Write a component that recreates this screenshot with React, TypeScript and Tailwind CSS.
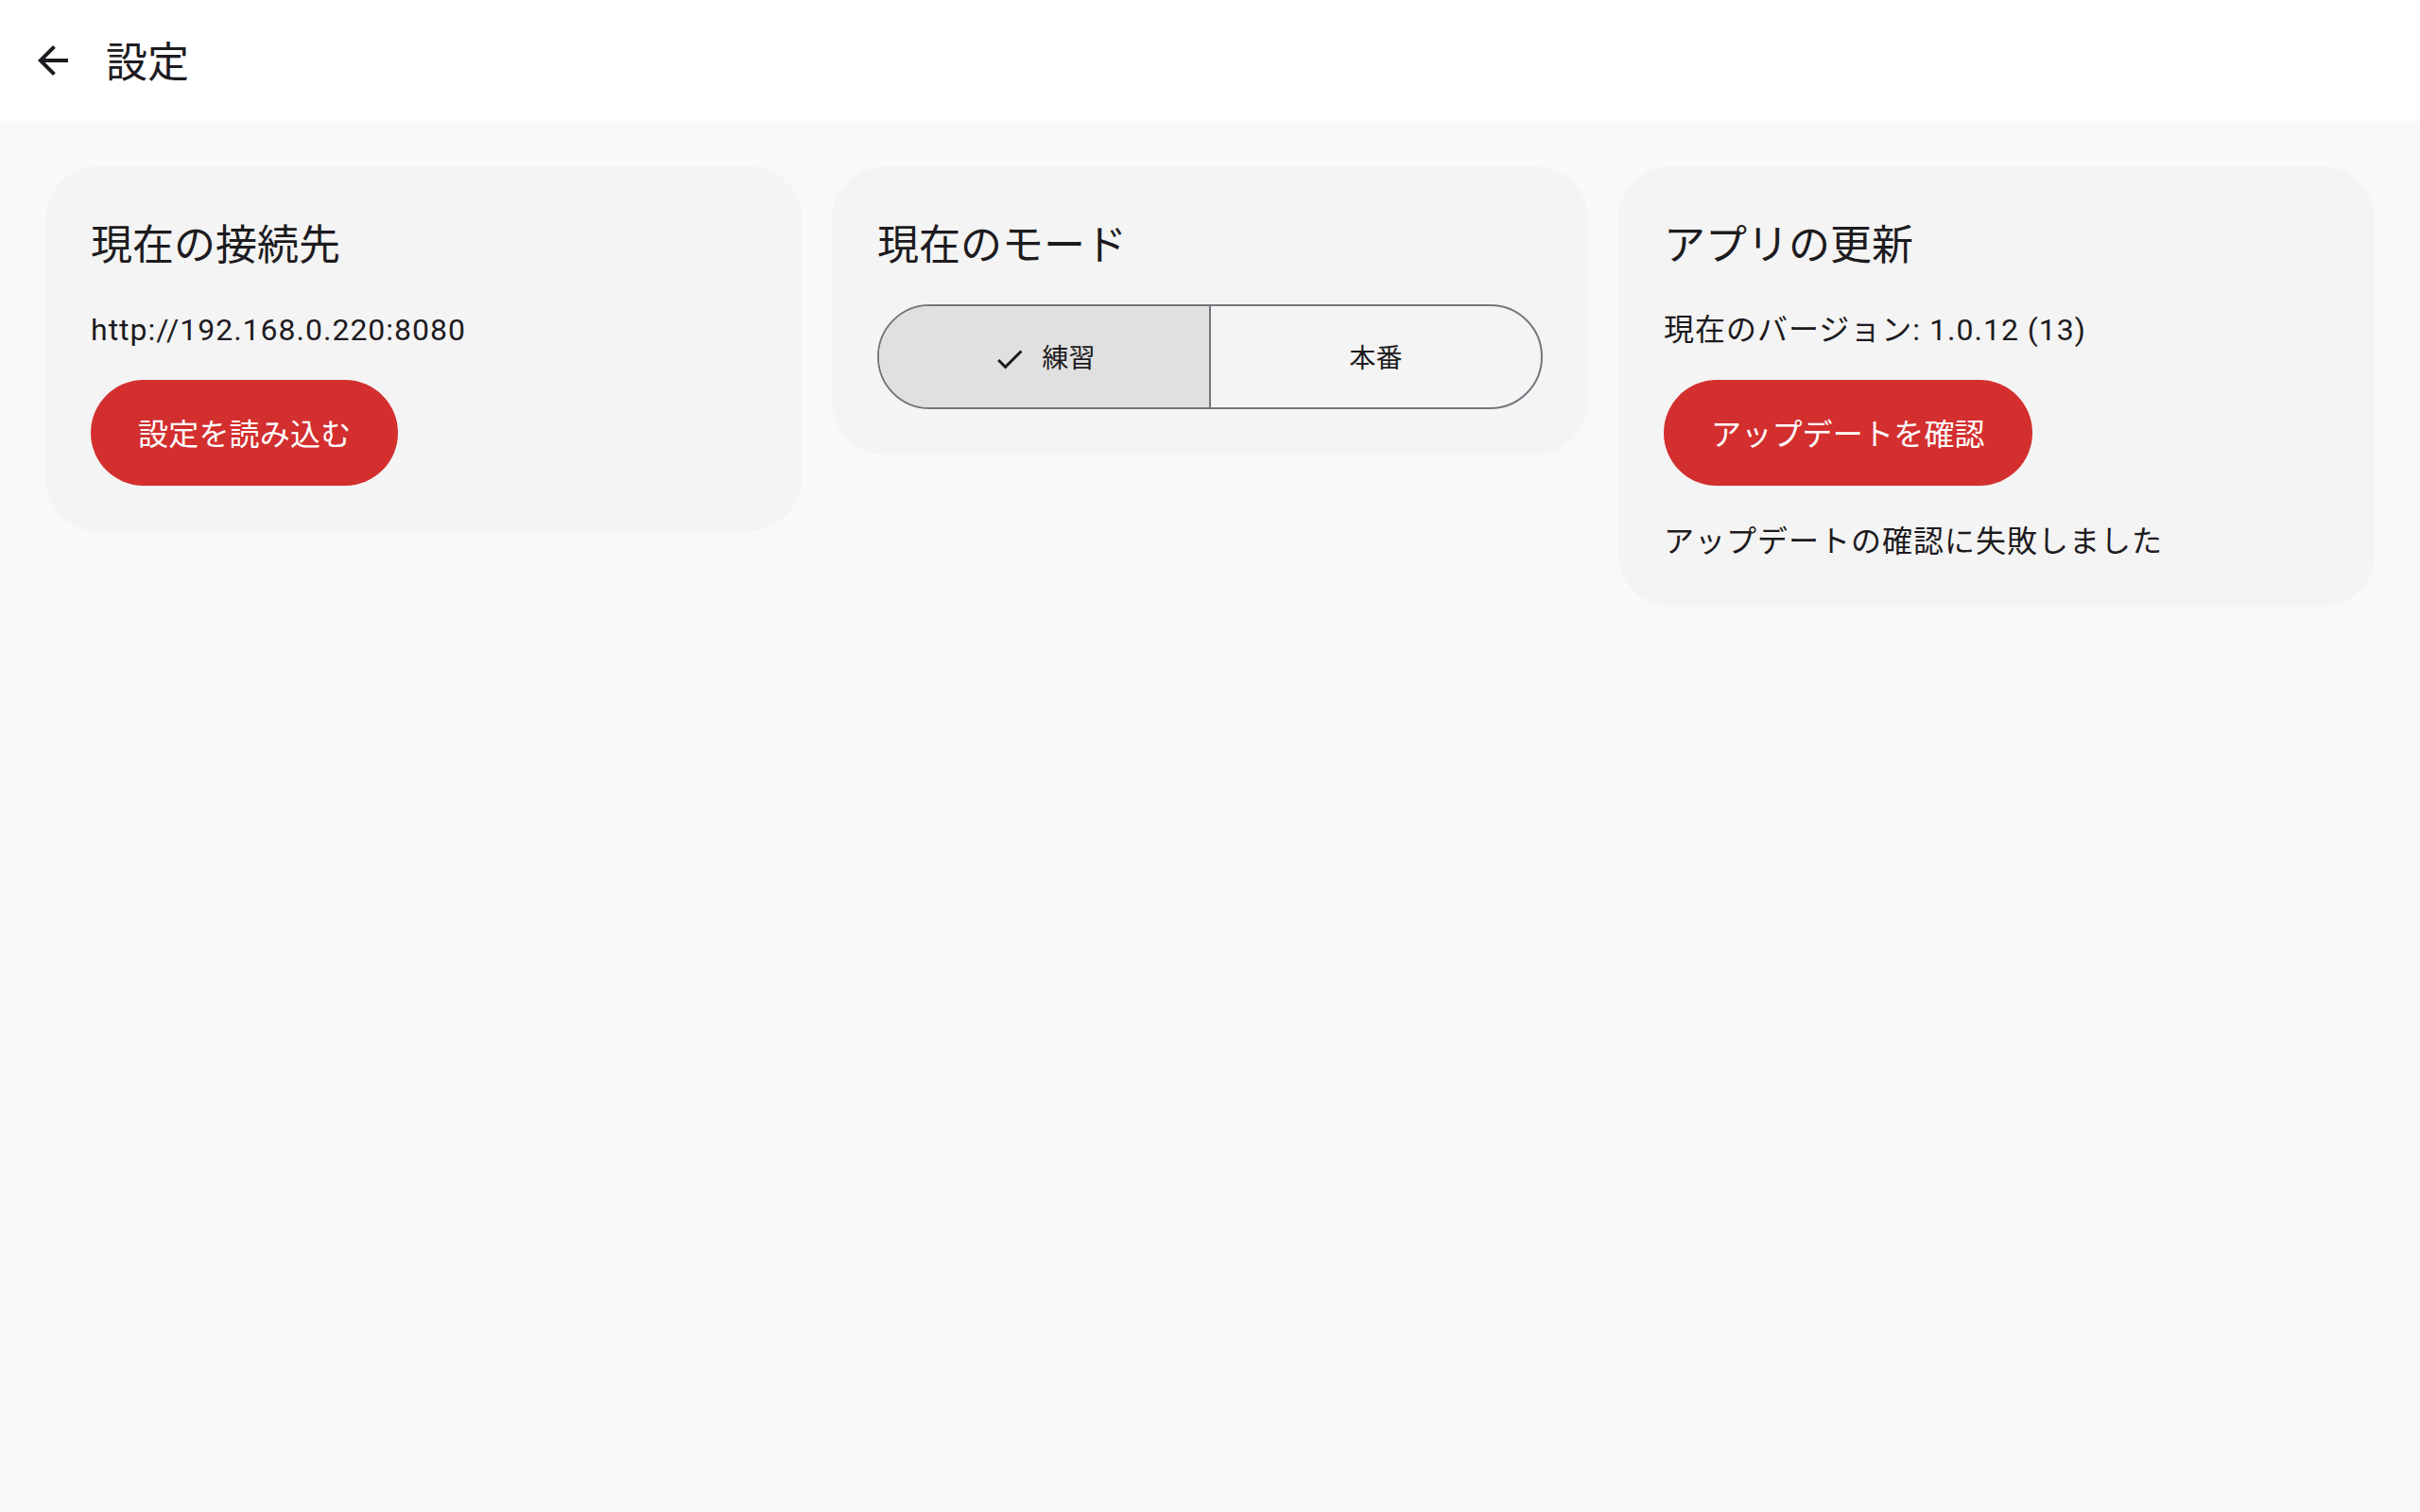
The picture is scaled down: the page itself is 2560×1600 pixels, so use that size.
import { useState } from "react";

const font = "font-['Roboto','Noto_Sans_CJK_JP',sans-serif]";

const BackIcon = () => (
  <svg viewBox="0 0 24 24" className="w-[48px] h-[48px] fill-[#1d1b20]">
    <path d="M20 11H7.83l5.59-5.59L12 4l-8 8 8 8 1.41-1.41L7.83 13H20v-2z" />
  </svg>
);

const CheckIcon = () => (
  <svg viewBox="0 0 24 24" className="w-[36px] h-[36px] fill-[#1d1b20]">
    <path d="M9 16.17L4.83 12l-1.42 1.41L9 19 21 7l-1.41-1.41z" />
  </svg>
);

const PillButton = ({ children }: { children: React.ReactNode }) => (
  <button className="h-[112px] px-[50px] pt-[4px] rounded-full bg-[#d32f2f] text-white text-[32px] tracking-[0.2px] self-start">
    {children}
  </button>
);

const CardTitle = ({ children }: { children: React.ReactNode }) => (
  <h2 className="text-[44px] leading-[60px] pt-[6px] text-[#1d1b20] mb-[32px]">{children}</h2>
);

const Body = ({ children, className = "" }: { children: React.ReactNode; className?: string }) => (
  <p className={`text-[32px] leading-[42px] pt-[6px] tracking-[1px] text-[#1d1b20] ${className}`}>
    {children}
  </p>
);

export default function App() {
  const [mode, setMode] = useState<"practice" | "production">("practice");

  return (
    <div className={`min-h-screen bg-[#f9f9f9] ${font}`}>
      {/* App bar */}
      <header className="h-[128px] bg-white flex items-center pl-[32px]">
        <button className="w-[48px] h-[48px] flex items-center justify-center">
          <BackIcon />
        </button>
        <h1 className="ml-[32px] pt-[6px] text-[44px] text-[#1d1b20]">設定</h1>
      </header>

      <main className="p-[48px] grid grid-cols-3 gap-[32px] items-start">
        {/* 接続先 */}
        <section className="bg-[#f4f4f4] rounded-[56px] p-[48px] flex flex-col">
          <CardTitle>現在の接続先</CardTitle>
          <Body className="mb-[32px]">http://192.168.0.220:8080</Body>
          <PillButton>設定を読み込む</PillButton>
        </section>

        {/* モード */}
        <section className="bg-[#f4f4f4] rounded-[56px] p-[48px] flex flex-col">
          <CardTitle>現在のモード</CardTitle>
          <div className="h-[111px] rounded-full border-2 border-[#79747e] flex overflow-hidden">
            <button
              onClick={() => setMode("practice")}
              className={`flex-1 flex items-center justify-center gap-[16px] pt-[5px] text-[28px] tracking-[0.2px] text-[#1d1b20] ${
                mode === "practice" ? "bg-[#e0e0e0]" : ""
              }`}
            >
              {mode === "practice" && <CheckIcon />}
              練習
            </button>
            <div className="w-[2px] bg-[#79747e]" />
            <button
              onClick={() => setMode("production")}
              className={`flex-1 flex items-center justify-center gap-[16px] pt-[5px] text-[28px] tracking-[0.2px] text-[#1d1b20] ${
                mode === "production" ? "bg-[#e0e0e0]" : ""
              }`}
            >
              {mode === "production" && <CheckIcon />}
              本番
            </button>
          </div>
        </section>

        {/* 更新 */}
        <section className="bg-[#f4f4f4] rounded-[56px] p-[48px] flex flex-col">
          <CardTitle>アプリの更新</CardTitle>
          <Body className="mb-[32px]">現在のバージョン: 1.0.12 (13)</Body>
          <PillButton>アップデートを確認</PillButton>
          <Body className="mt-[32px]">アップデートの確認に失敗しました</Body>
        </section>
      </main>
    </div>
  );
}
